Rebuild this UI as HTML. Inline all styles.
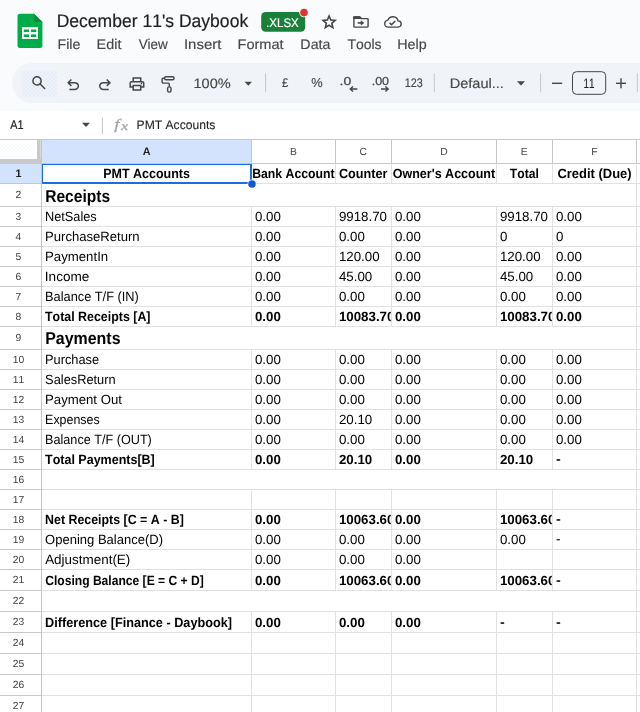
<!DOCTYPE html>
<html><head><meta charset="utf-8"><title>December 11's Daybook - Google Sheets</title>
<style>
html,body{margin:0;padding:0;width:640px;height:712px;overflow:hidden;}
body{width:640px;height:712px;overflow:hidden;background:#f9fbfd;position:relative;font-family:"Liberation Sans",sans-serif;}
#page{position:absolute;left:0;top:0;width:640px;height:712px;overflow:hidden;}
#boxes div{position:absolute;box-sizing:border-box;}
.dots{background-image:radial-gradient(circle,#e6eefc 0.35px,rgba(230,238,252,0) 0.8px),radial-gradient(circle,#e6eefc 0.35px,rgba(230,238,252,0) 0.8px);background-size:4px 4px,4px 4px;background-position:0 0,2px 2px;}
.d2{background-image:radial-gradient(circle,#d2e0fa 0.45px,rgba(210,224,250,0) 0.85px),radial-gradient(circle,#d2e0fa 0.45px,rgba(210,224,250,0) 0.85px);}
svg{position:absolute;left:0;top:0;font-family:"Liberation Sans",sans-serif;font-kerning:none;text-rendering:geometricPrecision;will-change:transform;}
svg text{white-space:pre;}
</style></head><body>
<div id="page">
<div id="boxes">
<div style="left:12px;top:63px;width:628px;height:40px;background:#f0f4f9;border-radius:20px 0 0 20px;"></div>
<div class="dots d2" style="left:22px;top:70.5px;width:35px;height:26px;"></div>
<div style="left:0px;top:110.5px;width:640px;height:29px;background:#fff;"></div>
<div style="left:0px;top:139px;width:640px;height:573px;background:#fff;"></div>
<div style="left:0px;top:139px;width:640px;height:1px;background:#c4c7c5;"></div>
<div class="dots" style="left:0px;top:140px;width:37px;height:19px;"></div>
<div style="left:37px;top:140px;width:4.5px;height:23.5px;background:#c9c9c9;"></div>
<div style="left:0px;top:159px;width:41.5px;height:4.5px;background:#c9c9c9;"></div>
<div style="left:39.9px;top:140px;width:0.7px;height:19px;background:#d8d8d8;"></div>
<div style="left:42px;top:140px;width:209px;height:23.5px;background:#d3e3fd;"></div>
<div style="left:0px;top:163.5px;width:41px;height:19.5px;background:#d3e3fd;"></div>
<div style="left:41px;top:163px;width:599px;height:1px;background:#c4c7c5;"></div>
<div style="left:41px;top:140px;width:1px;height:572px;background:#c4c7c5;"></div>
<div style="left:251px;top:140px;width:1px;height:23px;background:#c4c7c5;"></div>
<div style="left:335px;top:140px;width:1px;height:23px;background:#c4c7c5;"></div>
<div style="left:391px;top:140px;width:1px;height:23px;background:#c4c7c5;"></div>
<div style="left:496px;top:140px;width:1px;height:23px;background:#c4c7c5;"></div>
<div style="left:552px;top:140px;width:1px;height:23px;background:#c4c7c5;"></div>
<div style="left:636px;top:140px;width:1px;height:23px;background:#c4c7c5;"></div>
<div style="left:0px;top:183px;width:41px;height:1px;background:#c4c7c5;"></div>
<div style="left:42px;top:183px;width:598px;height:1px;background:#e1e1e1;"></div>
<div style="left:0px;top:206px;width:41px;height:1px;background:#c4c7c5;"></div>
<div style="left:42px;top:206px;width:598px;height:1px;background:#e1e1e1;"></div>
<div style="left:0px;top:226px;width:41px;height:1px;background:#c4c7c5;"></div>
<div style="left:42px;top:226px;width:598px;height:1px;background:#e1e1e1;"></div>
<div style="left:0px;top:246px;width:41px;height:1px;background:#c4c7c5;"></div>
<div style="left:42px;top:246px;width:598px;height:1px;background:#e1e1e1;"></div>
<div style="left:0px;top:266px;width:41px;height:1px;background:#c4c7c5;"></div>
<div style="left:42px;top:266px;width:598px;height:1px;background:#e1e1e1;"></div>
<div style="left:0px;top:286px;width:41px;height:1px;background:#c4c7c5;"></div>
<div style="left:42px;top:286px;width:598px;height:1px;background:#e1e1e1;"></div>
<div style="left:0px;top:306px;width:41px;height:1px;background:#c4c7c5;"></div>
<div style="left:42px;top:306px;width:598px;height:1px;background:#e1e1e1;"></div>
<div style="left:0px;top:326px;width:41px;height:1px;background:#c4c7c5;"></div>
<div style="left:42px;top:326px;width:598px;height:1px;background:#e1e1e1;"></div>
<div style="left:0px;top:349px;width:41px;height:1px;background:#c4c7c5;"></div>
<div style="left:42px;top:349px;width:598px;height:1px;background:#e1e1e1;"></div>
<div style="left:0px;top:369px;width:41px;height:1px;background:#c4c7c5;"></div>
<div style="left:42px;top:369px;width:598px;height:1px;background:#e1e1e1;"></div>
<div style="left:0px;top:389px;width:41px;height:1px;background:#c4c7c5;"></div>
<div style="left:42px;top:389px;width:598px;height:1px;background:#e1e1e1;"></div>
<div style="left:0px;top:409px;width:41px;height:1px;background:#c4c7c5;"></div>
<div style="left:42px;top:409px;width:598px;height:1px;background:#e1e1e1;"></div>
<div style="left:0px;top:429px;width:41px;height:1px;background:#c4c7c5;"></div>
<div style="left:42px;top:429px;width:598px;height:1px;background:#e1e1e1;"></div>
<div style="left:0px;top:449px;width:41px;height:1px;background:#c4c7c5;"></div>
<div style="left:42px;top:449px;width:598px;height:1px;background:#e1e1e1;"></div>
<div style="left:0px;top:469px;width:41px;height:1px;background:#c4c7c5;"></div>
<div style="left:42px;top:469px;width:598px;height:1px;background:#e1e1e1;"></div>
<div style="left:0px;top:489px;width:41px;height:1px;background:#c4c7c5;"></div>
<div style="left:42px;top:489px;width:598px;height:1px;background:#e1e1e1;"></div>
<div style="left:0px;top:509px;width:41px;height:1px;background:#c4c7c5;"></div>
<div style="left:42px;top:509px;width:598px;height:1px;background:#e1e1e1;"></div>
<div style="left:0px;top:529px;width:41px;height:1px;background:#c4c7c5;"></div>
<div style="left:42px;top:529px;width:598px;height:1px;background:#e1e1e1;"></div>
<div style="left:0px;top:549px;width:41px;height:1px;background:#c4c7c5;"></div>
<div style="left:42px;top:549px;width:598px;height:1px;background:#e1e1e1;"></div>
<div style="left:0px;top:569px;width:41px;height:1px;background:#c4c7c5;"></div>
<div style="left:42px;top:569px;width:598px;height:1px;background:#e1e1e1;"></div>
<div style="left:0px;top:590px;width:41px;height:1px;background:#c4c7c5;"></div>
<div style="left:42px;top:590px;width:598px;height:1px;background:#e1e1e1;"></div>
<div style="left:0px;top:611px;width:41px;height:1px;background:#c4c7c5;"></div>
<div style="left:42px;top:611px;width:598px;height:1px;background:#e1e1e1;"></div>
<div style="left:0px;top:632px;width:41px;height:1px;background:#c4c7c5;"></div>
<div style="left:42px;top:632px;width:598px;height:1px;background:#e1e1e1;"></div>
<div style="left:0px;top:653px;width:41px;height:1px;background:#c4c7c5;"></div>
<div style="left:42px;top:653px;width:598px;height:1px;background:#e1e1e1;"></div>
<div style="left:0px;top:674px;width:41px;height:1px;background:#c4c7c5;"></div>
<div style="left:42px;top:674px;width:598px;height:1px;background:#e1e1e1;"></div>
<div style="left:0px;top:695px;width:41px;height:1px;background:#c4c7c5;"></div>
<div style="left:42px;top:695px;width:598px;height:1px;background:#e1e1e1;"></div>
<div style="left:251px;top:164px;width:1px;height:20px;background:#e1e1e1;"></div>
<div style="left:251px;top:207px;width:1px;height:20px;background:#e1e1e1;"></div>
<div style="left:251px;top:227px;width:1px;height:20px;background:#e1e1e1;"></div>
<div style="left:251px;top:247px;width:1px;height:20px;background:#e1e1e1;"></div>
<div style="left:251px;top:267px;width:1px;height:20px;background:#e1e1e1;"></div>
<div style="left:251px;top:287px;width:1px;height:20px;background:#e1e1e1;"></div>
<div style="left:251px;top:307px;width:1px;height:20px;background:#e1e1e1;"></div>
<div style="left:251px;top:350px;width:1px;height:20px;background:#e1e1e1;"></div>
<div style="left:251px;top:370px;width:1px;height:20px;background:#e1e1e1;"></div>
<div style="left:251px;top:390px;width:1px;height:20px;background:#e1e1e1;"></div>
<div style="left:251px;top:410px;width:1px;height:20px;background:#e1e1e1;"></div>
<div style="left:251px;top:430px;width:1px;height:20px;background:#e1e1e1;"></div>
<div style="left:251px;top:450px;width:1px;height:20px;background:#e1e1e1;"></div>
<div style="left:251px;top:490px;width:1px;height:20px;background:#e1e1e1;"></div>
<div style="left:251px;top:510px;width:1px;height:20px;background:#e1e1e1;"></div>
<div style="left:251px;top:530px;width:1px;height:20px;background:#e1e1e1;"></div>
<div style="left:251px;top:550px;width:1px;height:20px;background:#e1e1e1;"></div>
<div style="left:251px;top:570px;width:1px;height:21px;background:#e1e1e1;"></div>
<div style="left:251px;top:612px;width:1px;height:21px;background:#e1e1e1;"></div>
<div style="left:251px;top:633px;width:1px;height:21px;background:#e1e1e1;"></div>
<div style="left:251px;top:654px;width:1px;height:21px;background:#e1e1e1;"></div>
<div style="left:251px;top:675px;width:1px;height:21px;background:#e1e1e1;"></div>
<div style="left:251px;top:696px;width:1px;height:21px;background:#e1e1e1;"></div>
<div style="left:335px;top:164px;width:1px;height:20px;background:#e1e1e1;"></div>
<div style="left:335px;top:207px;width:1px;height:20px;background:#e1e1e1;"></div>
<div style="left:335px;top:227px;width:1px;height:20px;background:#e1e1e1;"></div>
<div style="left:335px;top:247px;width:1px;height:20px;background:#e1e1e1;"></div>
<div style="left:335px;top:267px;width:1px;height:20px;background:#e1e1e1;"></div>
<div style="left:335px;top:287px;width:1px;height:20px;background:#e1e1e1;"></div>
<div style="left:335px;top:307px;width:1px;height:20px;background:#e1e1e1;"></div>
<div style="left:335px;top:350px;width:1px;height:20px;background:#e1e1e1;"></div>
<div style="left:335px;top:370px;width:1px;height:20px;background:#e1e1e1;"></div>
<div style="left:335px;top:390px;width:1px;height:20px;background:#e1e1e1;"></div>
<div style="left:335px;top:410px;width:1px;height:20px;background:#e1e1e1;"></div>
<div style="left:335px;top:430px;width:1px;height:20px;background:#e1e1e1;"></div>
<div style="left:335px;top:450px;width:1px;height:20px;background:#e1e1e1;"></div>
<div style="left:335px;top:490px;width:1px;height:20px;background:#e1e1e1;"></div>
<div style="left:335px;top:510px;width:1px;height:20px;background:#e1e1e1;"></div>
<div style="left:335px;top:530px;width:1px;height:20px;background:#e1e1e1;"></div>
<div style="left:335px;top:550px;width:1px;height:20px;background:#e1e1e1;"></div>
<div style="left:335px;top:570px;width:1px;height:21px;background:#e1e1e1;"></div>
<div style="left:335px;top:612px;width:1px;height:21px;background:#e1e1e1;"></div>
<div style="left:335px;top:633px;width:1px;height:21px;background:#e1e1e1;"></div>
<div style="left:335px;top:654px;width:1px;height:21px;background:#e1e1e1;"></div>
<div style="left:335px;top:675px;width:1px;height:21px;background:#e1e1e1;"></div>
<div style="left:335px;top:696px;width:1px;height:21px;background:#e1e1e1;"></div>
<div style="left:391px;top:164px;width:1px;height:20px;background:#e1e1e1;"></div>
<div style="left:391px;top:207px;width:1px;height:20px;background:#e1e1e1;"></div>
<div style="left:391px;top:227px;width:1px;height:20px;background:#e1e1e1;"></div>
<div style="left:391px;top:247px;width:1px;height:20px;background:#e1e1e1;"></div>
<div style="left:391px;top:267px;width:1px;height:20px;background:#e1e1e1;"></div>
<div style="left:391px;top:287px;width:1px;height:20px;background:#e1e1e1;"></div>
<div style="left:391px;top:307px;width:1px;height:20px;background:#e1e1e1;"></div>
<div style="left:391px;top:350px;width:1px;height:20px;background:#e1e1e1;"></div>
<div style="left:391px;top:370px;width:1px;height:20px;background:#e1e1e1;"></div>
<div style="left:391px;top:390px;width:1px;height:20px;background:#e1e1e1;"></div>
<div style="left:391px;top:410px;width:1px;height:20px;background:#e1e1e1;"></div>
<div style="left:391px;top:430px;width:1px;height:20px;background:#e1e1e1;"></div>
<div style="left:391px;top:450px;width:1px;height:20px;background:#e1e1e1;"></div>
<div style="left:391px;top:490px;width:1px;height:20px;background:#e1e1e1;"></div>
<div style="left:391px;top:510px;width:1px;height:20px;background:#e1e1e1;"></div>
<div style="left:391px;top:530px;width:1px;height:20px;background:#e1e1e1;"></div>
<div style="left:391px;top:550px;width:1px;height:20px;background:#e1e1e1;"></div>
<div style="left:391px;top:570px;width:1px;height:21px;background:#e1e1e1;"></div>
<div style="left:391px;top:612px;width:1px;height:21px;background:#e1e1e1;"></div>
<div style="left:391px;top:633px;width:1px;height:21px;background:#e1e1e1;"></div>
<div style="left:391px;top:654px;width:1px;height:21px;background:#e1e1e1;"></div>
<div style="left:391px;top:675px;width:1px;height:21px;background:#e1e1e1;"></div>
<div style="left:391px;top:696px;width:1px;height:21px;background:#e1e1e1;"></div>
<div style="left:496px;top:164px;width:1px;height:20px;background:#e1e1e1;"></div>
<div style="left:496px;top:207px;width:1px;height:20px;background:#e1e1e1;"></div>
<div style="left:496px;top:227px;width:1px;height:20px;background:#e1e1e1;"></div>
<div style="left:496px;top:247px;width:1px;height:20px;background:#e1e1e1;"></div>
<div style="left:496px;top:267px;width:1px;height:20px;background:#e1e1e1;"></div>
<div style="left:496px;top:287px;width:1px;height:20px;background:#e1e1e1;"></div>
<div style="left:496px;top:307px;width:1px;height:20px;background:#e1e1e1;"></div>
<div style="left:496px;top:350px;width:1px;height:20px;background:#e1e1e1;"></div>
<div style="left:496px;top:370px;width:1px;height:20px;background:#e1e1e1;"></div>
<div style="left:496px;top:390px;width:1px;height:20px;background:#e1e1e1;"></div>
<div style="left:496px;top:410px;width:1px;height:20px;background:#e1e1e1;"></div>
<div style="left:496px;top:430px;width:1px;height:20px;background:#e1e1e1;"></div>
<div style="left:496px;top:450px;width:1px;height:20px;background:#e1e1e1;"></div>
<div style="left:496px;top:490px;width:1px;height:20px;background:#e1e1e1;"></div>
<div style="left:496px;top:510px;width:1px;height:20px;background:#e1e1e1;"></div>
<div style="left:496px;top:530px;width:1px;height:20px;background:#e1e1e1;"></div>
<div style="left:496px;top:550px;width:1px;height:20px;background:#e1e1e1;"></div>
<div style="left:496px;top:570px;width:1px;height:21px;background:#e1e1e1;"></div>
<div style="left:496px;top:612px;width:1px;height:21px;background:#e1e1e1;"></div>
<div style="left:496px;top:633px;width:1px;height:21px;background:#e1e1e1;"></div>
<div style="left:496px;top:654px;width:1px;height:21px;background:#e1e1e1;"></div>
<div style="left:496px;top:675px;width:1px;height:21px;background:#e1e1e1;"></div>
<div style="left:496px;top:696px;width:1px;height:21px;background:#e1e1e1;"></div>
<div style="left:552px;top:164px;width:1px;height:20px;background:#e1e1e1;"></div>
<div style="left:552px;top:207px;width:1px;height:20px;background:#e1e1e1;"></div>
<div style="left:552px;top:227px;width:1px;height:20px;background:#e1e1e1;"></div>
<div style="left:552px;top:247px;width:1px;height:20px;background:#e1e1e1;"></div>
<div style="left:552px;top:267px;width:1px;height:20px;background:#e1e1e1;"></div>
<div style="left:552px;top:287px;width:1px;height:20px;background:#e1e1e1;"></div>
<div style="left:552px;top:307px;width:1px;height:20px;background:#e1e1e1;"></div>
<div style="left:552px;top:350px;width:1px;height:20px;background:#e1e1e1;"></div>
<div style="left:552px;top:370px;width:1px;height:20px;background:#e1e1e1;"></div>
<div style="left:552px;top:390px;width:1px;height:20px;background:#e1e1e1;"></div>
<div style="left:552px;top:410px;width:1px;height:20px;background:#e1e1e1;"></div>
<div style="left:552px;top:430px;width:1px;height:20px;background:#e1e1e1;"></div>
<div style="left:552px;top:450px;width:1px;height:20px;background:#e1e1e1;"></div>
<div style="left:552px;top:490px;width:1px;height:20px;background:#e1e1e1;"></div>
<div style="left:552px;top:510px;width:1px;height:20px;background:#e1e1e1;"></div>
<div style="left:552px;top:530px;width:1px;height:20px;background:#e1e1e1;"></div>
<div style="left:552px;top:550px;width:1px;height:20px;background:#e1e1e1;"></div>
<div style="left:552px;top:570px;width:1px;height:21px;background:#e1e1e1;"></div>
<div style="left:552px;top:612px;width:1px;height:21px;background:#e1e1e1;"></div>
<div style="left:552px;top:633px;width:1px;height:21px;background:#e1e1e1;"></div>
<div style="left:552px;top:654px;width:1px;height:21px;background:#e1e1e1;"></div>
<div style="left:552px;top:675px;width:1px;height:21px;background:#e1e1e1;"></div>
<div style="left:552px;top:696px;width:1px;height:21px;background:#e1e1e1;"></div>
<div style="left:636px;top:164px;width:1px;height:20px;background:#e1e1e1;"></div>
<div style="left:636px;top:184px;width:1px;height:23px;background:#e1e1e1;"></div>
<div style="left:636px;top:207px;width:1px;height:20px;background:#e1e1e1;"></div>
<div style="left:636px;top:227px;width:1px;height:20px;background:#e1e1e1;"></div>
<div style="left:636px;top:247px;width:1px;height:20px;background:#e1e1e1;"></div>
<div style="left:636px;top:267px;width:1px;height:20px;background:#e1e1e1;"></div>
<div style="left:636px;top:287px;width:1px;height:20px;background:#e1e1e1;"></div>
<div style="left:636px;top:307px;width:1px;height:20px;background:#e1e1e1;"></div>
<div style="left:636px;top:327px;width:1px;height:23px;background:#e1e1e1;"></div>
<div style="left:636px;top:350px;width:1px;height:20px;background:#e1e1e1;"></div>
<div style="left:636px;top:370px;width:1px;height:20px;background:#e1e1e1;"></div>
<div style="left:636px;top:390px;width:1px;height:20px;background:#e1e1e1;"></div>
<div style="left:636px;top:410px;width:1px;height:20px;background:#e1e1e1;"></div>
<div style="left:636px;top:430px;width:1px;height:20px;background:#e1e1e1;"></div>
<div style="left:636px;top:450px;width:1px;height:20px;background:#e1e1e1;"></div>
<div style="left:636px;top:470px;width:1px;height:20px;background:#e1e1e1;"></div>
<div style="left:636px;top:490px;width:1px;height:20px;background:#e1e1e1;"></div>
<div style="left:636px;top:510px;width:1px;height:20px;background:#e1e1e1;"></div>
<div style="left:636px;top:530px;width:1px;height:20px;background:#e1e1e1;"></div>
<div style="left:636px;top:550px;width:1px;height:20px;background:#e1e1e1;"></div>
<div style="left:636px;top:570px;width:1px;height:21px;background:#e1e1e1;"></div>
<div style="left:636px;top:591px;width:1px;height:21px;background:#e1e1e1;"></div>
<div style="left:636px;top:612px;width:1px;height:21px;background:#e1e1e1;"></div>
<div style="left:636px;top:633px;width:1px;height:21px;background:#e1e1e1;"></div>
<div style="left:636px;top:654px;width:1px;height:21px;background:#e1e1e1;"></div>
<div style="left:636px;top:675px;width:1px;height:21px;background:#e1e1e1;"></div>
<div style="left:636px;top:696px;width:1px;height:21px;background:#e1e1e1;"></div>
<div style="left:42px;top:163.8px;width:210px;height:1.4px;background:#1a6fe0;"></div>
<div style="left:42px;top:163.8px;width:1.3px;height:20px;background:#1a6fe0;"></div>
<div style="left:42px;top:182.1px;width:210px;height:1.9px;background:#1a6fe0;"></div>
<div style="left:250.1px;top:163.8px;width:1.9px;height:20px;background:#1a6fe0;"></div>
</div>
<svg width="640" height="712" viewBox="0 0 640 712">
<circle cx="252" cy="184" r="4.5" fill="#fff"/><circle cx="252" cy="184" r="3.8" fill="#0f5bd3"/>
<path d="M20 13.8 H34 L42.4 22.1 V45.6 a2.5 2.5 0 0 1 -2.5 2.5 H20 a2.5 2.5 0 0 1 -2.5 -2.5 V16.3 a2.5 2.5 0 0 1 2.5 -2.5 Z" fill="#00ac47"/>
<path d="M34 13.8 L42.4 22.1 H36 a2 2 0 0 1 -2 -2 Z" fill="#128a3c"/>
<rect x="22" y="27.1" width="16" height="11.9" fill="#fff"/>
<rect x="23.8" y="29.5" width="5.2" height="2.6" fill="#00ac47"/>
<rect x="23.8" y="34.4" width="5.2" height="2.6" fill="#00ac47"/>
<rect x="31.0" y="29.5" width="5.2" height="2.6" fill="#00ac47"/>
<rect x="31.0" y="34.4" width="5.2" height="2.6" fill="#00ac47"/>
<text x="56.66" y="26.90" font-size="18.2" font-weight="400" fill="#1f1f1f" textLength="191.51" lengthAdjust="spacingAndGlyphs" stroke="#1f1f1f" stroke-width="0.2">December 11's Daybook</text>
<rect x="261.2" y="12" width="44" height="19.8" rx="4.5" fill="#188038"/>
<text x="266.04" y="26.90" font-size="12.5" font-weight="400" fill="#fff" textLength="32.80" lengthAdjust="spacingAndGlyphs" stroke="#fff" stroke-width="0.2">.XLSX</text>
<circle cx="304" cy="12.6" r="4.7" fill="#f9fbfd"/><circle cx="304" cy="12.6" r="3.8" fill="#dc362e"/>
<path transform="translate(319.47,31.63) scale(0.0200625)" d="m354-287 126-76 126 77-33-144 111-96-146-13-58-136-58 135-146 13 111 97-33 143ZM233-120l65-281L80-590l288-25 112-265 112 265 288 25-218 189 65 281-247-149-247 149Z" fill="#444746"/>
<g fill="none" stroke="#444746" stroke-width="1.4" stroke-linejoin="round"><path d="M353.9 17.6 V26.3 a0.8 0.8 0 0 0 0.8 0.8 H367.3 a0.8 0.8 0 0 0 0.8 -0.8 V19.4 a0.8 0.8 0 0 0 -0.8 -0.8 H361.3 L359.7 16.9 H354.7 a0.8 0.8 0 0 0 -0.8 0.7 Z"/><path d="M357.6 22.9 H361.6" stroke-width="1.6"/></g>
<path d="M353.2 18.9 V17 a0.8 0.8 0 0 1 0.8 -0.8 H360 L361.9 18.3 V18.9Z" fill="#444746"/>
<path d="M360.8 20.3 L364.3 22.9 L360.8 25.5 Z" fill="#444746"/>
<g fill="none" stroke="#444746" stroke-width="1.4" stroke-linejoin="round"><path d="M388.3 27.1 A3.5 3.5 0 0 1 388 20.1 A5.25 5.25 0 0 1 398 20.9 A3.1 3.1 0 0 1 398.2 27.1 Z"/><path d="M389.6 22.9 L391.5 24.8 L395.2 20.9" stroke-width="1.5" stroke-linejoin="miter"/></g>
<text x="57.53" y="48.70" font-size="14" font-weight="400" fill="#444746" textLength="22.90" lengthAdjust="spacingAndGlyphs" stroke="#444746" stroke-width="0.15">File</text>
<text x="96.62" y="48.70" font-size="14" font-weight="400" fill="#444746" textLength="24.79" lengthAdjust="spacingAndGlyphs" stroke="#444746" stroke-width="0.15">Edit</text>
<text x="138.64" y="48.70" font-size="14" font-weight="400" fill="#444746" textLength="29.23" lengthAdjust="spacingAndGlyphs" stroke="#444746" stroke-width="0.15">View</text>
<text x="183.92" y="48.70" font-size="14" font-weight="400" fill="#444746" textLength="37.49" lengthAdjust="spacingAndGlyphs" stroke="#444746" stroke-width="0.15">Insert</text>
<text x="237.50" y="48.70" font-size="14" font-weight="400" fill="#444746" textLength="46.15" lengthAdjust="spacingAndGlyphs" stroke="#444746" stroke-width="0.15">Format</text>
<text x="300.38" y="48.70" font-size="14" font-weight="400" fill="#444746" textLength="30.02" lengthAdjust="spacingAndGlyphs" stroke="#444746" stroke-width="0.15">Data</text>
<text x="347.49" y="48.70" font-size="14" font-weight="400" fill="#444746" textLength="34.07" lengthAdjust="spacingAndGlyphs" stroke="#444746" stroke-width="0.15">Tools</text>
<text x="397.23" y="48.70" font-size="14" font-weight="400" fill="#444746" textLength="29.42" lengthAdjust="spacingAndGlyphs" stroke="#444746" stroke-width="0.15">Help</text>
<path transform="translate(29.90,91.75) scale(0.01875)" d="M784-120 532-372q-30 24-69 38t-83 14q-109 0-184.5-75.5T120-580q0-109 75.5-184.5T380-840q109 0 184.5 75.5T640-580q0 44-14 83t-38 69l252 252-56 56ZM380-400q75 0 127.5-52.5T560-580q0-75-52.5-127.5T380-760q-75 0-127.5 52.5T200-580q0 75 52.5 127.5T380-400Z" fill="#444746"/>
<path transform="translate(64.10,93.88) scale(0.01875)" d="M280-200v-80h284q63 0 109.5-40T720-420q0-60-46.5-100T564-560H312l104 104-56 56-200-200 200-200 56 56-104 104h252q97 0 166.5 63T800-420q0 94-69.5 157T564-200H280Z" fill="#444746"/>
<path transform="translate(96.00,93.88) scale(0.01875)" d="M396-200q-97 0-166.5-63T160-420q0-94 69.5-157T396-640h252L544-744l56-56 200 200-200 200-56-56 104-104H396q-63 0-109.5 40T240-420q0 60 46.5 100T396-280h284v80H396Z" fill="#444746"/>
<path transform="translate(127.95,92.95) scale(0.01875)" d="M640-640v-120H320v120h-80v-200h480v200h-80Zm-480 80h640-640Zm560 100q17 0 28.5-11.5T760-500q0-17-11.5-28.5T720-540q-17 0-28.5 11.5T680-500q0 17 11.5 28.5T720-460Zm-80 260v-160H320v160h320Zm80 80H240v-160H80v-240q0-51 35-85.5t85-34.5h560q51 0 85.5 34.5T880-520v240H720v160Zm80-240v-160q0-17-11.5-28.5T760-560H200q-17 0-28.5 11.5T160-520v160h80v-80h480v80h80Z" fill="#444746"/>
<g fill="none" stroke="#444746" stroke-width="1.4" stroke-linejoin="round"><rect x="164.6" y="76.7" width="9.4" height="3.1" rx="1.3"/><path d="M164.6 78.2 H163.2 a1.1 1.1 0 0 0 -1.1 1.1 V82 a1.1 1.1 0 0 0 1.1 1.1 H168.2 a1.1 1.1 0 0 1 1.1 1.1 V86.6"/><rect x="167.6" y="86.9" width="3.4" height="5.2" rx="1.5"/></g>
<text x="193.49" y="88.40" font-size="13.6" font-weight="400" fill="#444746" textLength="37.23" lengthAdjust="spacingAndGlyphs" stroke="#444746" stroke-width="0.15">100%</text>
<path d="M244.6 81.8 h7.4 l-3.7 4 Z" fill="#444746"/>
<rect x="265.1" y="73.3" width="1" height="19" fill="#c7c7c7"/>
<text x="281.88" y="86.90" font-size="12.6" font-weight="400" fill="#444746" textLength="6.32" lengthAdjust="spacingAndGlyphs" stroke="#444746" stroke-width="0.15">£</text>
<text x="311.34" y="86.70" font-size="13" font-weight="400" fill="#444746" textLength="11.42" lengthAdjust="spacingAndGlyphs" stroke="#444746" stroke-width="0.15">%</text>
<text x="339.62" y="85.00" font-size="11.5" font-weight="400" fill="#444746" textLength="11.68" lengthAdjust="spacingAndGlyphs" stroke="#444746" stroke-width="0.25">.0</text>
<path d="M357.4 89 H350.4 M353 86.4 L350.2 89 L353 91.6" fill="none" stroke="#444746" stroke-width="1.4"/>
<text x="371.71" y="85.00" font-size="11.5" font-weight="400" fill="#444746" textLength="17.38" lengthAdjust="spacingAndGlyphs" stroke="#444746" stroke-width="0.25">.00</text>
<path d="M381 89 H388 M385.4 86.4 L388.2 89 L385.4 91.6" fill="none" stroke="#444746" stroke-width="1.4"/>
<text x="404.78" y="86.70" font-size="12.5" font-weight="400" fill="#444746" textLength="18.00" lengthAdjust="spacingAndGlyphs" stroke="#444746" stroke-width="0.15">123</text>
<rect x="433.8" y="73.3" width="1" height="19" fill="#c7c7c7"/>
<text x="449.71" y="88.30" font-size="13.8" font-weight="400" fill="#444746" textLength="54.22" lengthAdjust="spacingAndGlyphs" stroke="#444746" stroke-width="0.15">Defaul...</text>
<path d="M517 81.2 h8 l-4 4.2 Z" fill="#444746"/>
<rect x="540.1" y="73.3" width="1" height="19" fill="#c7c7c7"/>
<rect x="552" y="82.6" width="10.2" height="1.4" fill="#444746"/>
<rect x="572.5" y="71.7" width="33.2" height="22.6" rx="4" fill="none" stroke="#444746" stroke-width="1"/>
<text x="583.54" y="88.10" font-size="13.6" font-weight="400" fill="#1f1f1f" textLength="11.04" lengthAdjust="spacingAndGlyphs" stroke="#1f1f1f" stroke-width="0.15">11</text>
<rect x="616" y="82.6" width="10" height="1.4" fill="#444746"/><rect x="620.3" y="78.3" width="1.4" height="10" fill="#444746"/>
<rect x="636.8" y="73.3" width="1" height="19" fill="#c7c7c7"/>
<text x="10.28" y="128.70" font-size="12.6" font-weight="400" fill="#1f1f1f" textLength="13.35" lengthAdjust="spacingAndGlyphs" stroke="#1f1f1f" stroke-width="0.2">A1</text>
<path d="M82 122.7 h8 l-4 4.2 Z" fill="#444746"/>
<rect x="101.9" y="117.5" width="1" height="16.5" fill="#c4c7c5"/>
<text x="114.39" y="129.30" font-size="14.5" font-weight="400" font-style="italic" font-family="Liberation Serif" fill="#a3a6a8" textLength="5.24" lengthAdjust="spacingAndGlyphs" stroke="#a3a6a8" stroke-width="0.25">f</text>
<text x="121.00" y="129.80" font-size="12" font-weight="400" font-style="italic" font-family="Liberation Serif" fill="#a3a6a8" textLength="7.22" lengthAdjust="spacingAndGlyphs" stroke="#a3a6a8" stroke-width="0.25">x</text>
<text x="136.61" y="128.60" font-size="12.4" font-weight="400" fill="#1f1f1f" textLength="78.73" lengthAdjust="spacingAndGlyphs" stroke="#1f1f1f" stroke-width="0.1">PMT Accounts</text>
<text x="146.6" y="154.7" font-size="10.8" text-anchor="middle" font-weight="700" fill="#1f1f1f">A</text>
<text x="293.5" y="154.7" font-size="10.3" text-anchor="middle" font-weight="400" fill="#444746">B</text>
<text x="363.3" y="154.7" font-size="10.3" text-anchor="middle" font-weight="400" fill="#444746">C</text>
<text x="444" y="154.7" font-size="10.3" text-anchor="middle" font-weight="400" fill="#444746">D</text>
<text x="524.3" y="154.7" font-size="10.3" text-anchor="middle" font-weight="400" fill="#444746">E</text>
<text x="594.3" y="154.7" font-size="10.3" text-anchor="middle" font-weight="400" fill="#444746">F</text>
<text x="18.4" y="177.15" font-size="10.8" text-anchor="middle" font-weight="700" fill="#1f1f1f">1</text>
<text x="18.4" y="197.95" font-size="10.3" text-anchor="middle" font-weight="400" fill="#3f4241">2</text>
<text x="18.4" y="220.15" font-size="10.3" text-anchor="middle" font-weight="400" fill="#3f4241">3</text>
<text x="18.4" y="240.15" font-size="10.3" text-anchor="middle" font-weight="400" fill="#3f4241">4</text>
<text x="18.4" y="260.15" font-size="10.3" text-anchor="middle" font-weight="400" fill="#3f4241">5</text>
<text x="18.4" y="280.15" font-size="10.3" text-anchor="middle" font-weight="400" fill="#3f4241">6</text>
<text x="18.4" y="300.15" font-size="10.3" text-anchor="middle" font-weight="400" fill="#3f4241">7</text>
<text x="18.4" y="320.15" font-size="10.3" text-anchor="middle" font-weight="400" fill="#3f4241">8</text>
<text x="18.4" y="340.95" font-size="10.3" text-anchor="middle" font-weight="400" fill="#3f4241">9</text>
<text x="18.4" y="363.15" font-size="10.3" text-anchor="middle" font-weight="400" fill="#3f4241">10</text>
<text x="18.4" y="383.15" font-size="10.3" text-anchor="middle" font-weight="400" fill="#3f4241">11</text>
<text x="18.4" y="403.15" font-size="10.3" text-anchor="middle" font-weight="400" fill="#3f4241">12</text>
<text x="18.4" y="423.15" font-size="10.3" text-anchor="middle" font-weight="400" fill="#3f4241">13</text>
<text x="18.4" y="443.15" font-size="10.3" text-anchor="middle" font-weight="400" fill="#3f4241">14</text>
<text x="18.4" y="463.15" font-size="10.3" text-anchor="middle" font-weight="400" fill="#3f4241">15</text>
<text x="18.4" y="483.15" font-size="10.3" text-anchor="middle" font-weight="400" fill="#3f4241">16</text>
<text x="18.4" y="503.15" font-size="10.3" text-anchor="middle" font-weight="400" fill="#3f4241">17</text>
<text x="18.4" y="523.15" font-size="10.3" text-anchor="middle" font-weight="400" fill="#3f4241">18</text>
<text x="18.4" y="543.15" font-size="10.3" text-anchor="middle" font-weight="400" fill="#3f4241">19</text>
<text x="18.4" y="563.15" font-size="10.3" text-anchor="middle" font-weight="400" fill="#3f4241">20</text>
<text x="18.4" y="582.75" font-size="10.3" text-anchor="middle" font-weight="400" fill="#3f4241">21</text>
<text x="18.4" y="603.75" font-size="10.3" text-anchor="middle" font-weight="400" fill="#3f4241">22</text>
<text x="18.4" y="624.75" font-size="10.3" text-anchor="middle" font-weight="400" fill="#3f4241">23</text>
<text x="18.4" y="645.75" font-size="10.3" text-anchor="middle" font-weight="400" fill="#3f4241">24</text>
<text x="18.4" y="666.75" font-size="10.3" text-anchor="middle" font-weight="400" fill="#3f4241">25</text>
<text x="18.4" y="687.75" font-size="10.3" text-anchor="middle" font-weight="400" fill="#3f4241">26</text>
<text x="18.4" y="708.75" font-size="10.3" text-anchor="middle" font-weight="400" fill="#3f4241">27</text>
<text x="103.16" y="177.50" font-size="13.3" font-weight="700" fill="#000" textLength="86.85" lengthAdjust="spacingAndGlyphs" >PMT Accounts</text>
<text x="252.18" y="177.50" font-size="13.3" font-weight="700" fill="#000" textLength="82.47" lengthAdjust="spacingAndGlyphs" >Bank Account</text>
<text x="338.98" y="177.50" font-size="13.3" font-weight="700" fill="#000" textLength="48.46" lengthAdjust="spacingAndGlyphs" >Counter</text>
<text x="392.74" y="177.50" font-size="13.3" font-weight="700" fill="#000" textLength="102.42" lengthAdjust="spacingAndGlyphs" >Owner's Account</text>
<text x="509.86" y="177.50" font-size="13.3" font-weight="700" fill="#000" textLength="29.00" lengthAdjust="spacingAndGlyphs" >Total</text>
<text x="557.47" y="177.50" font-size="13.3" font-weight="700" fill="#000" textLength="74.18" lengthAdjust="spacingAndGlyphs" >Credit (Due)</text>
<text x="45.26" y="201.75" font-size="17.2" font-weight="700" fill="#000" textLength="64.78" lengthAdjust="spacingAndGlyphs" >Receipts</text>
<text x="45.23" y="344.25" font-size="17.2" font-weight="700" fill="#000" textLength="75.32" lengthAdjust="spacingAndGlyphs" >Payments</text>
<text x="45.05" y="220.50" font-size="13.3" font-weight="400" fill="#000" textLength="51.71" lengthAdjust="spacingAndGlyphs" >NetSales</text>
<text x="45.03" y="240.50" font-size="13.3" font-weight="400" fill="#000" textLength="94.62" lengthAdjust="spacingAndGlyphs" >PurchaseReturn</text>
<text x="45.02" y="260.50" font-size="13.3" font-weight="400" fill="#000" textLength="63.14" lengthAdjust="spacingAndGlyphs" >PaymentIn</text>
<text x="44.85" y="280.50" font-size="13.3" font-weight="400" fill="#000" textLength="44.56" lengthAdjust="spacingAndGlyphs" >Income</text>
<text x="45.05" y="300.50" font-size="13.3" font-weight="400" fill="#000" textLength="93.79" lengthAdjust="spacingAndGlyphs" >Balance T/F (IN)</text>
<text x="45.06" y="320.50" font-size="13.3" font-weight="700" fill="#000" textLength="105.44" lengthAdjust="spacingAndGlyphs" >Total Receipts [A]</text>
<text x="45.05" y="363.50" font-size="13.3" font-weight="400" fill="#000" textLength="54.07" lengthAdjust="spacingAndGlyphs" >Purchase</text>
<text x="45.12" y="383.50" font-size="13.3" font-weight="400" fill="#000" textLength="70.51" lengthAdjust="spacingAndGlyphs" >SalesReturn</text>
<text x="45.02" y="403.50" font-size="13.3" font-weight="400" fill="#000" textLength="76.88" lengthAdjust="spacingAndGlyphs" >Payment Out</text>
<text x="45.08" y="423.50" font-size="13.3" font-weight="400" fill="#000" textLength="54.67" lengthAdjust="spacingAndGlyphs" >Expenses</text>
<text x="45.06" y="443.50" font-size="13.3" font-weight="400" fill="#000" textLength="106.77" lengthAdjust="spacingAndGlyphs" >Balance T/F (OUT)</text>
<text x="45.06" y="463.50" font-size="13.3" font-weight="700" fill="#000" textLength="109.69" lengthAdjust="spacingAndGlyphs" >Total Payments[B]</text>
<text x="45.07" y="523.50" font-size="13.3" font-weight="700" fill="#000" textLength="138.72" lengthAdjust="spacingAndGlyphs" >Net Receipts [C = A - B]</text>
<text x="45.08" y="543.50" font-size="13.3" font-weight="400" fill="#000" textLength="117.92" lengthAdjust="spacingAndGlyphs" >Opening Balance(D)</text>
<text x="45.17" y="563.50" font-size="13.3" font-weight="400" fill="#000" textLength="85.16" lengthAdjust="spacingAndGlyphs" >Adjustment(E)</text>
<text x="45.20" y="584.60" font-size="13.3" font-weight="700" fill="#000" textLength="158.57" lengthAdjust="spacingAndGlyphs" >Closing Balance [E = C + D]</text>
<text x="45.05" y="626.60" font-size="13.3" font-weight="700" fill="#000" textLength="186.96" lengthAdjust="spacingAndGlyphs" >Difference [Finance - Daybook]</text>
<defs><clipPath id="c1"><rect x="251" y="160" width="83.8" height="560"/></clipPath><clipPath id="c2"><rect x="335" y="160" width="55.8" height="560"/></clipPath><clipPath id="c3"><rect x="391" y="160" width="104.8" height="560"/></clipPath><clipPath id="c4"><rect x="496" y="160" width="55.8" height="560"/></clipPath><clipPath id="c5"><rect x="552" y="160" width="83.8" height="560"/></clipPath></defs>
<text x="254.90" y="220.50" font-size="13.3" font-weight="400" fill="#000" textLength="25.90" lengthAdjust="spacingAndGlyphs" >0.00</text>
<text x="338.90" y="220.50" font-size="13.3" font-weight="400" fill="#000" textLength="48.10" lengthAdjust="spacingAndGlyphs" >9918.70</text>
<text x="394.90" y="220.50" font-size="13.3" font-weight="400" fill="#000" textLength="25.90" lengthAdjust="spacingAndGlyphs" >0.00</text>
<text x="499.90" y="220.50" font-size="13.3" font-weight="400" fill="#000" textLength="48.10" lengthAdjust="spacingAndGlyphs" >9918.70</text>
<text x="555.90" y="220.50" font-size="13.3" font-weight="400" fill="#000" textLength="25.90" lengthAdjust="spacingAndGlyphs" >0.00</text>
<text x="254.90" y="240.50" font-size="13.3" font-weight="400" fill="#000" textLength="25.90" lengthAdjust="spacingAndGlyphs" >0.00</text>
<text x="338.90" y="240.50" font-size="13.3" font-weight="400" fill="#000" textLength="25.90" lengthAdjust="spacingAndGlyphs" >0.00</text>
<text x="394.90" y="240.50" font-size="13.3" font-weight="400" fill="#000" textLength="25.90" lengthAdjust="spacingAndGlyphs" >0.00</text>
<text x="499.90" y="240.50" font-size="13.3" font-weight="400" fill="#000" textLength="7.40" lengthAdjust="spacingAndGlyphs" >0</text>
<text x="555.90" y="240.50" font-size="13.3" font-weight="400" fill="#000" textLength="7.40" lengthAdjust="spacingAndGlyphs" >0</text>
<text x="254.90" y="260.50" font-size="13.3" font-weight="400" fill="#000" textLength="25.90" lengthAdjust="spacingAndGlyphs" >0.00</text>
<text x="338.90" y="260.50" font-size="13.3" font-weight="400" fill="#000" textLength="40.70" lengthAdjust="spacingAndGlyphs" >120.00</text>
<text x="394.90" y="260.50" font-size="13.3" font-weight="400" fill="#000" textLength="25.90" lengthAdjust="spacingAndGlyphs" >0.00</text>
<text x="499.90" y="260.50" font-size="13.3" font-weight="400" fill="#000" textLength="40.70" lengthAdjust="spacingAndGlyphs" >120.00</text>
<text x="555.90" y="260.50" font-size="13.3" font-weight="400" fill="#000" textLength="25.90" lengthAdjust="spacingAndGlyphs" >0.00</text>
<text x="254.90" y="280.50" font-size="13.3" font-weight="400" fill="#000" textLength="25.90" lengthAdjust="spacingAndGlyphs" >0.00</text>
<text x="338.90" y="280.50" font-size="13.3" font-weight="400" fill="#000" textLength="33.30" lengthAdjust="spacingAndGlyphs" >45.00</text>
<text x="394.90" y="280.50" font-size="13.3" font-weight="400" fill="#000" textLength="25.90" lengthAdjust="spacingAndGlyphs" >0.00</text>
<text x="499.90" y="280.50" font-size="13.3" font-weight="400" fill="#000" textLength="33.30" lengthAdjust="spacingAndGlyphs" >45.00</text>
<text x="555.90" y="280.50" font-size="13.3" font-weight="400" fill="#000" textLength="25.90" lengthAdjust="spacingAndGlyphs" >0.00</text>
<text x="254.90" y="300.50" font-size="13.3" font-weight="400" fill="#000" textLength="25.90" lengthAdjust="spacingAndGlyphs" >0.00</text>
<text x="338.90" y="300.50" font-size="13.3" font-weight="400" fill="#000" textLength="25.90" lengthAdjust="spacingAndGlyphs" >0.00</text>
<text x="394.90" y="300.50" font-size="13.3" font-weight="400" fill="#000" textLength="25.90" lengthAdjust="spacingAndGlyphs" >0.00</text>
<text x="499.90" y="300.50" font-size="13.3" font-weight="400" fill="#000" textLength="25.90" lengthAdjust="spacingAndGlyphs" >0.00</text>
<text x="555.90" y="300.50" font-size="13.3" font-weight="400" fill="#000" textLength="25.90" lengthAdjust="spacingAndGlyphs" >0.00</text>
<text x="254.90" y="320.50" font-size="13.3" font-weight="700" fill="#000" textLength="25.90" lengthAdjust="spacingAndGlyphs" >0.00</text>
<text x="338.90" y="320.50" font-size="13.3" font-weight="700" fill="#000" textLength="55.50" lengthAdjust="spacingAndGlyphs" clip-path="url(#c2)">10083.70</text>
<text x="394.90" y="320.50" font-size="13.3" font-weight="700" fill="#000" textLength="25.90" lengthAdjust="spacingAndGlyphs" >0.00</text>
<text x="499.90" y="320.50" font-size="13.3" font-weight="700" fill="#000" textLength="55.50" lengthAdjust="spacingAndGlyphs" clip-path="url(#c4)">10083.70</text>
<text x="555.90" y="320.50" font-size="13.3" font-weight="700" fill="#000" textLength="25.90" lengthAdjust="spacingAndGlyphs" >0.00</text>
<text x="254.90" y="363.50" font-size="13.3" font-weight="400" fill="#000" textLength="25.90" lengthAdjust="spacingAndGlyphs" >0.00</text>
<text x="338.90" y="363.50" font-size="13.3" font-weight="400" fill="#000" textLength="25.90" lengthAdjust="spacingAndGlyphs" >0.00</text>
<text x="394.90" y="363.50" font-size="13.3" font-weight="400" fill="#000" textLength="25.90" lengthAdjust="spacingAndGlyphs" >0.00</text>
<text x="499.90" y="363.50" font-size="13.3" font-weight="400" fill="#000" textLength="25.90" lengthAdjust="spacingAndGlyphs" >0.00</text>
<text x="555.90" y="363.50" font-size="13.3" font-weight="400" fill="#000" textLength="25.90" lengthAdjust="spacingAndGlyphs" >0.00</text>
<text x="254.90" y="383.50" font-size="13.3" font-weight="400" fill="#000" textLength="25.90" lengthAdjust="spacingAndGlyphs" >0.00</text>
<text x="338.90" y="383.50" font-size="13.3" font-weight="400" fill="#000" textLength="25.90" lengthAdjust="spacingAndGlyphs" >0.00</text>
<text x="394.90" y="383.50" font-size="13.3" font-weight="400" fill="#000" textLength="25.90" lengthAdjust="spacingAndGlyphs" >0.00</text>
<text x="499.90" y="383.50" font-size="13.3" font-weight="400" fill="#000" textLength="25.90" lengthAdjust="spacingAndGlyphs" >0.00</text>
<text x="555.90" y="383.50" font-size="13.3" font-weight="400" fill="#000" textLength="25.90" lengthAdjust="spacingAndGlyphs" >0.00</text>
<text x="254.90" y="403.50" font-size="13.3" font-weight="400" fill="#000" textLength="25.90" lengthAdjust="spacingAndGlyphs" >0.00</text>
<text x="338.90" y="403.50" font-size="13.3" font-weight="400" fill="#000" textLength="25.90" lengthAdjust="spacingAndGlyphs" >0.00</text>
<text x="394.90" y="403.50" font-size="13.3" font-weight="400" fill="#000" textLength="25.90" lengthAdjust="spacingAndGlyphs" >0.00</text>
<text x="499.90" y="403.50" font-size="13.3" font-weight="400" fill="#000" textLength="25.90" lengthAdjust="spacingAndGlyphs" >0.00</text>
<text x="555.90" y="403.50" font-size="13.3" font-weight="400" fill="#000" textLength="25.90" lengthAdjust="spacingAndGlyphs" >0.00</text>
<text x="254.90" y="423.50" font-size="13.3" font-weight="400" fill="#000" textLength="25.90" lengthAdjust="spacingAndGlyphs" >0.00</text>
<text x="338.90" y="423.50" font-size="13.3" font-weight="400" fill="#000" textLength="33.30" lengthAdjust="spacingAndGlyphs" >20.10</text>
<text x="394.90" y="423.50" font-size="13.3" font-weight="400" fill="#000" textLength="25.90" lengthAdjust="spacingAndGlyphs" >0.00</text>
<text x="499.90" y="423.50" font-size="13.3" font-weight="400" fill="#000" textLength="25.90" lengthAdjust="spacingAndGlyphs" >0.00</text>
<text x="555.90" y="423.50" font-size="13.3" font-weight="400" fill="#000" textLength="25.90" lengthAdjust="spacingAndGlyphs" >0.00</text>
<text x="254.90" y="443.50" font-size="13.3" font-weight="400" fill="#000" textLength="25.90" lengthAdjust="spacingAndGlyphs" >0.00</text>
<text x="338.90" y="443.50" font-size="13.3" font-weight="400" fill="#000" textLength="25.90" lengthAdjust="spacingAndGlyphs" >0.00</text>
<text x="394.90" y="443.50" font-size="13.3" font-weight="400" fill="#000" textLength="25.90" lengthAdjust="spacingAndGlyphs" >0.00</text>
<text x="499.90" y="443.50" font-size="13.3" font-weight="400" fill="#000" textLength="25.90" lengthAdjust="spacingAndGlyphs" >0.00</text>
<text x="555.90" y="443.50" font-size="13.3" font-weight="400" fill="#000" textLength="25.90" lengthAdjust="spacingAndGlyphs" >0.00</text>
<text x="254.90" y="463.50" font-size="13.3" font-weight="700" fill="#000" textLength="25.90" lengthAdjust="spacingAndGlyphs" >0.00</text>
<text x="338.90" y="463.50" font-size="13.3" font-weight="700" fill="#000" textLength="33.30" lengthAdjust="spacingAndGlyphs" >20.10</text>
<text x="394.90" y="463.50" font-size="13.3" font-weight="700" fill="#000" textLength="25.90" lengthAdjust="spacingAndGlyphs" >0.00</text>
<text x="499.90" y="463.50" font-size="13.3" font-weight="700" fill="#000" textLength="33.30" lengthAdjust="spacingAndGlyphs" >20.10</text>
<rect x="556.6" y="459.20" width="3.6" height="1.5" fill="#000"/>
<text x="254.90" y="523.50" font-size="13.3" font-weight="700" fill="#000" textLength="25.90" lengthAdjust="spacingAndGlyphs" >0.00</text>
<text x="338.90" y="523.50" font-size="13.3" font-weight="700" fill="#000" textLength="55.50" lengthAdjust="spacingAndGlyphs" clip-path="url(#c2)">10063.60</text>
<text x="394.90" y="523.50" font-size="13.3" font-weight="700" fill="#000" textLength="25.90" lengthAdjust="spacingAndGlyphs" >0.00</text>
<text x="499.90" y="523.50" font-size="13.3" font-weight="700" fill="#000" textLength="55.50" lengthAdjust="spacingAndGlyphs" clip-path="url(#c4)">10063.60</text>
<rect x="556.6" y="519.20" width="3.6" height="1.5" fill="#000"/>
<text x="254.90" y="543.50" font-size="13.3" font-weight="400" fill="#000" textLength="25.90" lengthAdjust="spacingAndGlyphs" >0.00</text>
<text x="338.90" y="543.50" font-size="13.3" font-weight="400" fill="#000" textLength="25.90" lengthAdjust="spacingAndGlyphs" >0.00</text>
<text x="394.90" y="543.50" font-size="13.3" font-weight="400" fill="#000" textLength="25.90" lengthAdjust="spacingAndGlyphs" >0.00</text>
<text x="499.90" y="543.50" font-size="13.3" font-weight="400" fill="#000" textLength="25.90" lengthAdjust="spacingAndGlyphs" >0.00</text>
<rect x="556.6" y="539.20" width="3.3" height="1.1" fill="#000"/>
<text x="254.90" y="563.50" font-size="13.3" font-weight="400" fill="#000" textLength="25.90" lengthAdjust="spacingAndGlyphs" >0.00</text>
<text x="338.90" y="563.50" font-size="13.3" font-weight="400" fill="#000" textLength="25.90" lengthAdjust="spacingAndGlyphs" >0.00</text>
<text x="394.90" y="563.50" font-size="13.3" font-weight="400" fill="#000" textLength="25.90" lengthAdjust="spacingAndGlyphs" >0.00</text>
<text x="254.90" y="584.60" font-size="13.3" font-weight="700" fill="#000" textLength="25.90" lengthAdjust="spacingAndGlyphs" >0.00</text>
<text x="338.90" y="584.60" font-size="13.3" font-weight="700" fill="#000" textLength="55.50" lengthAdjust="spacingAndGlyphs" clip-path="url(#c2)">10063.60</text>
<text x="394.90" y="584.60" font-size="13.3" font-weight="700" fill="#000" textLength="25.90" lengthAdjust="spacingAndGlyphs" >0.00</text>
<text x="499.90" y="584.60" font-size="13.3" font-weight="700" fill="#000" textLength="55.50" lengthAdjust="spacingAndGlyphs" clip-path="url(#c4)">10063.60</text>
<rect x="556.6" y="580.30" width="3.6" height="1.5" fill="#000"/>
<text x="254.90" y="626.60" font-size="13.3" font-weight="700" fill="#000" textLength="25.90" lengthAdjust="spacingAndGlyphs" >0.00</text>
<text x="338.90" y="626.60" font-size="13.3" font-weight="700" fill="#000" textLength="25.90" lengthAdjust="spacingAndGlyphs" >0.00</text>
<text x="394.90" y="626.60" font-size="13.3" font-weight="700" fill="#000" textLength="25.90" lengthAdjust="spacingAndGlyphs" >0.00</text>
<rect x="500.6" y="622.30" width="3.6" height="1.5" fill="#000"/>
<rect x="556.6" y="622.30" width="3.6" height="1.5" fill="#000"/>
</svg>
</div>
</body></html>
